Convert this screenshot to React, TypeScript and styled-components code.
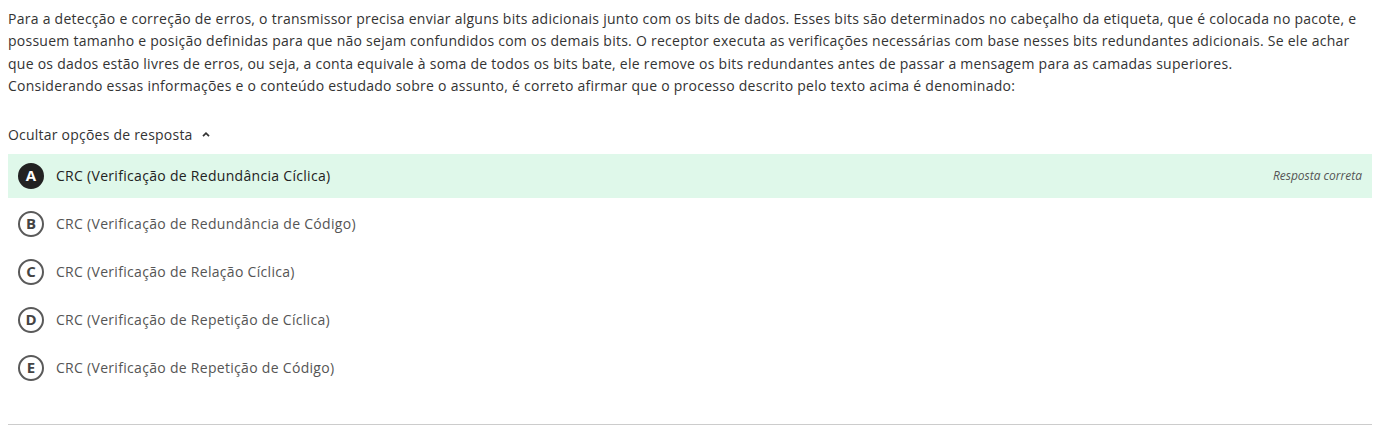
import React from "react";
import styled, { createGlobalStyle } from "styled-components";

const Global = createGlobalStyle`
  body {
    margin: 8px;
    background: #ffffff;
    font-family: "Open Sans", "Noto Sans", sans-serif;
    color: #333333;
  }
`;

const Wrapper = styled.div`
  padding-right: 7px;
`;

const Statement = styled.p`
  margin: 0;
  font-size: 14px;
  line-height: 22.4px;
  letter-spacing: 0.26px;
  color: #333333;
`;

const Toggle = styled.button`
  display: flex;
  align-items: center;
  gap: 9px;
  margin-top: 26px;
  padding: 0;
  border: none;
  background: none;
  font-family: inherit;
  font-size: 14px;
  line-height: 22px;
  letter-spacing: 0.22px;
  color: #333333;
  cursor: pointer;
`;

const Options = styled.div`
  display: flex;
  flex-direction: column;
  gap: 4px;
  margin-top: 8px;
`;

const Option = styled.div<{ $correct?: boolean }>`
  display: flex;
  align-items: center;
  height: 44px;
  padding: 0 10px 0 10px;
  background: ${(p) => (p.$correct ? "#dff8ea" : "transparent")};
`;

const Letter = styled.span<{ $filled?: boolean }>`
  box-sizing: border-box;
  display: flex;
  align-items: center;
  justify-content: center;
  width: 26px;
  height: 26px;
  border-radius: 50%;
  border: 2px solid ${(p) => (p.$filled ? "#222222" : "#5a5a5a")};
  background: ${(p) => (p.$filled ? "#222222" : "transparent")};
  color: ${(p) => (p.$filled ? "#ffffff" : "#444444")};
  font-size: 15px;
  font-weight: 700;
  line-height: 1;
`;

const Label = styled.span<{ $dark?: boolean }>`
  flex: 1;
  margin-left: 12px;
  font-size: 14px;
  letter-spacing: 0.3px;
  color: ${(p) => (p.$dark ? "#222222" : "#555555")};
`;

const Verdict = styled.span`
  font-size: 12px;
  font-style: italic;
  color: #555555;
`;

const Divider = styled.hr`
  margin: 34px 0 0;
  border: none;
  border-top: 1px solid #cccccc;
`;

const options = [
  { l: "A", t: "CRC (Verificação de Redundância Cíclica)", correct: true },
  { l: "B", t: "CRC (Verificação de Redundância de Código)" },
  { l: "C", t: "CRC (Verificação de Relação Cíclica)" },
  { l: "D", t: "CRC (Verificação de Repetição de Cíclica)" },
  { l: "E", t: "CRC (Verificação de Repetição de Código)" },
];

export default function App() {
  return (
    <>
      <Global />
      <Wrapper>
        <Statement>
          Para a detecção e correção de erros, o transmissor precisa enviar alguns bits adicionais junto com os bits de dados. Esses bits são determinados no cabeçalho da etiqueta, que é colocada no pacote, e possuem tamanho e posição definidas para que não sejam confundidos com os demais bits. O receptor executa as verificações necessárias com base nesses bits redundantes adicionais. Se ele achar que os dados estão livres de erros, ou seja, a conta equivale à soma de todos os bits bate, ele remove os bits redundantes antes de passar a mensagem para as camadas superiores.
          <br />
          Considerando essas informações e o conteúdo estudado sobre o assunto, é correto afirmar que o processo descrito pelo texto acima é denominado:
        </Statement>
        <Toggle>
          Ocultar opções de resposta
          <svg width="8" height="5" viewBox="0 0 8 5">
            <path d="M1 4.2 L4 1.2 L7 4.2" fill="none" stroke="#333" strokeWidth="1.7" />
          </svg>
        </Toggle>
        <Options>
          {options.map((o) => (
            <Option key={o.l} $correct={o.correct}>
              <Letter $filled={o.correct}>{o.l}</Letter>
              <Label $dark={o.correct}>{o.t}</Label>
              {o.correct && <Verdict>Resposta correta</Verdict>}
            </Option>
          ))}
        </Options>
        <Divider />
      </Wrapper>
    </>
  );
}
